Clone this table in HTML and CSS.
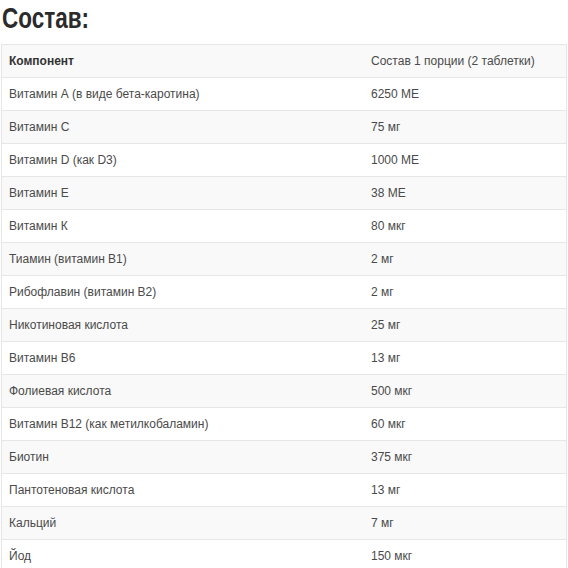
FILE: index.html
```html
<!DOCTYPE html>
<html lang="ru">
<head>
<meta charset="utf-8">
<link rel="stylesheet" href="styles.css">
</head>
<body>
<h2 class="title"><span class="title-text">Состав:</span></h2>
<table class="comp">
<thead>
<tr><th>Компонент</th><th class="val">Состав 1 порции (2 таблетки)</th></tr>
</thead>
<tbody>
<tr><td>Витамин А (в виде бета-каротина)</td><td>6250 МЕ</td></tr>
<tr><td>Витамин С</td><td>75 мг</td></tr>
<tr><td>Витамин D (как D3)</td><td>1000 МЕ</td></tr>
<tr><td>Витамин Е</td><td>38 МЕ</td></tr>
<tr><td>Витамин К</td><td>80 мкг</td></tr>
<tr><td>Тиамин (витамин В1)</td><td>2 мг</td></tr>
<tr><td>Рибофлавин (витамин В2)</td><td>2 мг</td></tr>
<tr><td>Никотиновая кислота</td><td>25 мг</td></tr>
<tr><td>Витамин В6</td><td>13 мг</td></tr>
<tr><td>Фолиевая кислота</td><td>500 мкг</td></tr>
<tr><td>Витамин В12 (как метилкобаламин)</td><td>60 мкг</td></tr>
<tr><td>Биотин</td><td>375 мкг</td></tr>
<tr><td>Пантотеновая кислота</td><td>13 мг</td></tr>
<tr><td>Кальций</td><td>7 мг</td></tr>
<tr><td>Йод</td><td>150 мкг</td></tr>
</tbody>
</table>
</body>
</html>
```
FILE: styles.css
```css
html, body {
  margin: 0;
  padding: 0;
  background: #fff;
}
body {
  font-family: "Liberation Sans", Arial, sans-serif;
  color: #4a4a4a;
  padding: 0 1px;
}
.title {
  margin: 0;
  padding: 1px 0 0 1px;
  height: 44px;
  box-sizing: border-box;
  font-size: 30px;
  line-height: 34px;
  font-weight: bold;
  color: #2b2b2b;
}
.title-text {
  display: inline-block;
  transform: scaleX(0.75);
  transform-origin: left center;
}
.comp {
  width: 100%;
  border-collapse: collapse;
  border: 1px solid #e6e6e6;
  font-size: 12px;
}
.comp th, .comp td {
  height: 32px;
  padding: 0 7px;
  text-align: left;
  border-top: 1px solid #e6e6e6;
  vertical-align: middle;
}
.comp th {
  font-weight: bold;
  color: #333;
}
.comp th.val {
  font-weight: normal;
  color: #4a4a4a;
}
.comp td:first-child, .comp th:first-child {
  width: 348px;
}
.comp thead tr,
.comp tbody tr:nth-child(even) {
  background: #f9f9f9;
}
```
